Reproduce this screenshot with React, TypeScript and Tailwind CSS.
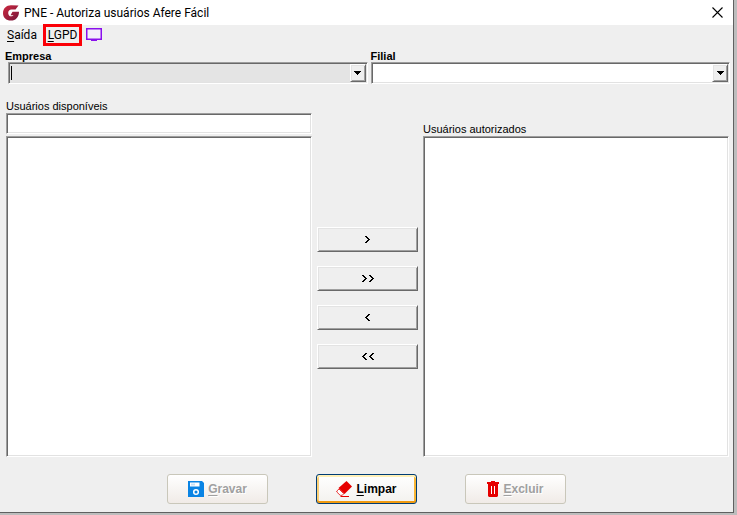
import type { ReactNode } from "react";

const bevelIn =
  "border border-t-[#9d9d9d] border-l-[#9d9d9d] border-r-white border-b-white shadow-[inset_1px_1px_0_#686868,inset_-1px_-1px_0_#e2e2e2]";
const bevelOut =
  "border border-t-white border-l-white border-r-[#696969] border-b-[#696969] shadow-[inset_1px_1px_0_#e3e3e3,inset_-1px_-1px_0_#a0a0a0]";

function Combo({ id, label, active = false }: { id: string; label: string; active?: boolean }) {
  return (
    <div className="min-w-0 flex-1">
      <label htmlFor={id} className={`block h-3 text-[11px] leading-3 font-bold ${active ? "-ml-[3px]" : ""}`}>
        {label}
      </label>
      <div className="relative">
        <select
          id={id}
          className={`block h-[22px] w-full appearance-none outline-none ${bevelIn} ${active ? "bg-[#e4e4e4]" : "bg-white"}`}
        />
        {active && <span className="absolute top-1 left-[3px] h-3.5 w-px bg-black" />}
        <span
          className={`pointer-events-none absolute top-0.5 right-0.5 flex h-[18px] w-4 items-center justify-center bg-[#efefef] ${bevelOut}`}
        >
          <svg width="7" height="4" viewBox="0 0 7 4" shapeRendering="crispEdges" aria-hidden="true">
            <path d="M0 0h7v1H0zM1 1h5v1H1zM2 2h3v1H2zM3 3h1v1H3z" />
          </svg>
        </span>
      </div>
    </div>
  );
}

function MoveButton({ children, title }: { children: ReactNode; title: string }) {
  return (
    <button aria-label={title} className={`flex h-[25px] w-full items-center justify-center bg-[#efefef] ${bevelOut}`}>
      {children}
    </button>
  );
}

function Chevrons({ count, left = false }: { count: 1 | 2; left?: boolean }) {
  const shape = left
    ? "M3 0h2v1H3zM2 1h2v1H2zM1 2h2v1H1zM0 3h2v1H0zM1 4h2v1H1zM2 5h2v1H2zM3 6h2v1H3z"
    : "M0 0h2v1H0zM1 1h2v1H1zM2 2h2v1H2zM3 3h2v1H3zM2 4h2v1H2zM1 5h2v1H1zM0 6h2v1H0z";
  return (
    <svg
      width={count === 2 ? 12 : 5}
      height="7"
      viewBox={count === 2 ? "0 0 12 7" : "0 0 5 7"}
      shapeRendering="crispEdges"
      aria-hidden="true"
    >
      <path d={shape} />
      {count === 2 && <path d={shape} transform="translate(7 0)" />}
    </svg>
  );
}

function ActionButton({ icon, text, disabled = false }: { icon: ReactNode; text: string; disabled?: boolean }) {
  return (
    <button
      disabled={disabled}
      className={`flex h-[30px] w-[101px] items-center justify-center gap-1 rounded-[3px] border text-[12px] leading-4 font-bold ${
        disabled
          ? "border-[#c9c7ba] bg-linear-to-b from-white to-[#f0ebe7] text-[#a0a0a0] [text-shadow:1px_1px_0_#fff]"
          : "border-[#003c74] bg-linear-to-b from-white to-[#f3f1ee] text-black shadow-[inset_0_2px_0_#fff0b8,inset_0_-2px_0_#f09a10,inset_2px_0_0_#fbd077,inset_-2px_0_0_#f8b636]"
      }`}
    >
      {icon}
      <span>
        <span className="underline underline-offset-2">{text[0]}</span>
        {text.slice(1)}
      </span>
    </button>
  );
}

const DiskIcon = () => (
  <svg width="16" height="16" viewBox="0 0 16 16" aria-hidden="true">
    <path d="M0 0h14l2 2v14H0z" fill="#0a84e4" />
    <path d="M2 1.500h9.500v4H2z" fill="#fff" />
    <path d="M3 2.500h4v2H3z" fill="#c6e0f7" />
    <circle cx="8" cy="11" r="2.300" fill="#0a84e4" stroke="#fff" strokeWidth="1.500" />
  </svg>
);

const EraserIcon = () => (
  <svg width="16" height="16" viewBox="0 0 16 16" aria-hidden="true">
    <path d="M10.500 0 16 5.500 8.500 13 2.500 7z" fill="#e60000" />
    <path d="M3 8 7.700 12.700 6.300 14.300H4.200L.8 11V10z" fill="#fff" stroke="#e60000" strokeWidth=".8" />
    <path d="M4.500 15H13v1H4.500z" fill="#e60000" />
  </svg>
);

const TrashIcon = () => (
  <svg width="12" height="16" viewBox="0 0 12 16" aria-hidden="true">
    <path d="M4 0h4v1h4v2H0V1h4zM1 3h10v12l-1 1H2l-1-1z" fill="#e60000" />
    <path d="M4 5h1v8H4zM7 5h1v8H7z" fill="#fff" />
  </svg>
);

export default function App() {
  return (
    <div className="flex min-h-screen bg-[#bdbdbd] pr-[3px] pb-0.5 font-['Liberation_Sans',Arial,sans-serif] text-[11px] text-black">
      <div className="flex min-w-0 flex-1 flex-col border-r border-b border-[#606060] bg-[#efefef]">
        <header className="flex h-[25px] items-center bg-white pr-2.5 pl-[3px] font-['Roboto','Open_Sans',sans-serif] text-[12px]">
          <svg width="16" height="16" viewBox="0 0 16 16" className="mr-[5px]" aria-hidden="true">
            <defs>
              <linearGradient id="brand" x1="0" y1="0" x2="1" y2="1">
                <stop offset="0" stopColor="#cf2840" />
                <stop offset="1" stopColor="#74163a" />
              </linearGradient>
            </defs>
            <path
              d="M15.500.5 12.500 4.500H8.500C6.500 4.500 5.200 5.900 5.200 7.900S6.500 11.300 8.200 11.300C9.300 11.300 10 11 10.400 10.300H7.500L9.500 6.800H16C16 12 13 15.600 7.800 15.600 3.300 15.600 0 12.500 0 8.200 0 3.500 3.400.3 8 .3z"
              fill="url(#brand)"
            />
          </svg>
          <h1 className="min-w-0 flex-1 truncate">PNE - Autoriza usuários Afere Fácil</h1>
          <button aria-label="Fechar">
            <svg width="11" height="11" viewBox="0 0 11 11" stroke="#000" strokeWidth="1.100" aria-hidden="true">
              <path d="M.5.5l10 10M10.500.5l-10 10" />
            </svg>
          </button>
        </header>

        <nav className="-mt-px flex h-[22px] items-center pl-[7px] font-['Roboto','Open_Sans',sans-serif] text-[12px] leading-4">
          <button className="mr-2 w-7 text-left">
            <span className="underline underline-offset-2">S</span>aída
          </button>
          <button className="h-[22px] w-[39px] border-3 border-[#fb0007]">
            <span className="underline underline-offset-2">L</span>GPD
          </button>
          <button aria-label="Monitor" className="ml-1">
            <svg width="16" height="14" viewBox="0 0 16 14" aria-hidden="true">
              <path d="M.75.75h14.500v10.500H.75z" fill="#f4effa" stroke="#8a10ec" strokeWidth="1.500" />
              <path d="M5 11.500h6V13H5z" fill="#8a10ec" />
            </svg>
          </button>
        </nav>

        <div className="mt-1 flex gap-[3px] pr-[3px] pl-2">
          <Combo id="empresa" label="Empresa" active />
          <Combo id="filial" label="Filial" />
        </div>

        <main className="mt-4 flex flex-1 pr-1 pl-1.5">
          <div className="flex min-w-0 flex-1 flex-col">
            <label htmlFor="busca" className="h-[13px] leading-[13px]">
              Usuários disponíveis
            </label>
            <input id="busca" type="text" className={`h-[21px] w-full bg-white px-1 outline-none ${bevelIn}`} />
            <select
              multiple
              aria-label="Lista de usuários disponíveis"
              className={`mt-0.5 w-full flex-1 appearance-none bg-white outline-none ${bevelIn}`}
            />
          </div>

          <div className="flex w-[111px] flex-col gap-3.5 px-[5px] pt-[127px]">
            <MoveButton title="Autorizar selecionado">
              <Chevrons count={1} />
            </MoveButton>
            <MoveButton title="Autorizar todos">
              <Chevrons count={2} />
            </MoveButton>
            <MoveButton title="Remover selecionado">
              <Chevrons count={1} left />
            </MoveButton>
            <MoveButton title="Remover todos">
              <Chevrons count={2} left />
            </MoveButton>
          </div>

          <div className="flex min-w-0 flex-1 flex-col pt-[23px]">
            <label htmlFor="autorizados" className="h-[13px] leading-[13px]">
              Usuários autorizados
            </label>
            <select
              id="autorizados"
              multiple
              className={`w-full flex-1 appearance-none bg-white outline-none ${bevelIn}`}
            />
          </div>
        </main>

        <footer className="flex justify-center gap-12 pt-[17px] pb-2">
          <ActionButton icon={<DiskIcon />} text="Gravar" disabled />
          <ActionButton icon={<EraserIcon />} text="Limpar" />
          <ActionButton icon={<TrashIcon />} text="Excluir" disabled />
        </footer>
      </div>
    </div>
  );
}
